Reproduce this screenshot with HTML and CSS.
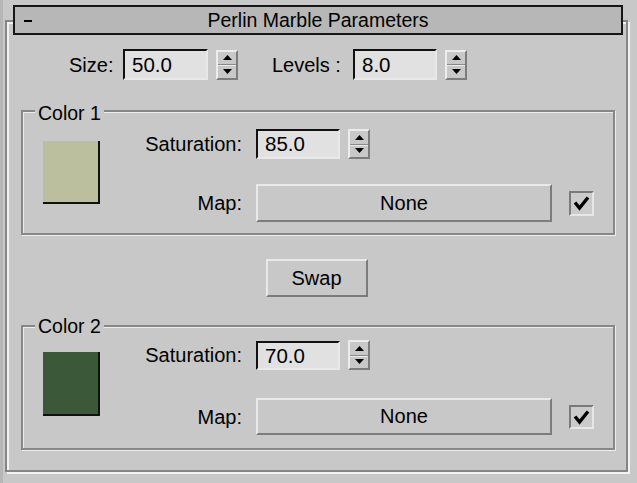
FILE: index.html
```html
<!DOCTYPE html>
<html>
<head>
<meta charset="utf-8">
<link rel="stylesheet" href="styles.css">
</head>
<body>
<div class="frame">
  <div class="title">
    <span class="minus"></span>
    <span class="title-text">Perlin Marble Parameters</span>
  </div>

  <div class="row1">
    <span class="label size-label">Size:</span>
    <div class="input w85">50.0</div>
    <div class="spin">
      <div class="spin-half"><svg width="9" height="5" viewBox="0 0 9 5"><polygon points="4.5,0 9,5 0,5" fill="#000"/></svg></div>
      <div class="spin-half low"><svg width="9" height="5" viewBox="0 0 9 5"><polygon points="0,0 9,0 4.5,5" fill="#000"/></svg></div>
    </div>
    <span class="label levels-label">Levels :</span>
    <div class="input w84">8.0</div>
    <div class="spin">
      <div class="spin-half"><svg width="9" height="5" viewBox="0 0 9 5"><polygon points="4.5,0 9,5 0,5" fill="#000"/></svg></div>
      <div class="spin-half low"><svg width="9" height="5" viewBox="0 0 9 5"><polygon points="0,0 9,0 4.5,5" fill="#000"/></svg></div>
    </div>
  </div>

  <div class="group">
    <div class="group-title">Color 1</div>
    <div class="group-body">
      <div class="swatch swatch1"></div>
      <div class="fields">
        <span class="label right">Saturation:</span>
        <div class="field-row">
          <div class="input w84">85.0</div>
          <div class="spin">
            <div class="spin-half"><svg width="9" height="5" viewBox="0 0 9 5"><polygon points="4.5,0 9,5 0,5" fill="#000"/></svg></div>
            <div class="spin-half low"><svg width="9" height="5" viewBox="0 0 9 5"><polygon points="0,0 9,0 4.5,5" fill="#000"/></svg></div>
          </div>
        </div>
        <span class="label right">Map:</span>
        <div class="field-row">
          <div class="button map-btn">None</div>
          <div class="check"><svg width="21" height="21" viewBox="0 0 21 21"><polyline points="4,9.5 8.5,15 17,4.5" fill="none" stroke="#000" stroke-width="3.4"/></svg></div>
        </div>
      </div>
    </div>
  </div>

  <div class="button swap">Swap</div>

  <div class="group group2">
    <div class="group-title">Color 2</div>
    <div class="group-body">
      <div class="swatch swatch2"></div>
      <div class="fields">
        <span class="label right">Saturation:</span>
        <div class="field-row">
          <div class="input w84">70.0</div>
          <div class="spin">
            <div class="spin-half"><svg width="9" height="5" viewBox="0 0 9 5"><polygon points="4.5,0 9,5 0,5" fill="#000"/></svg></div>
            <div class="spin-half low"><svg width="9" height="5" viewBox="0 0 9 5"><polygon points="0,0 9,0 4.5,5" fill="#000"/></svg></div>
          </div>
        </div>
        <span class="label right">Map:</span>
        <div class="field-row">
          <div class="button map-btn">None</div>
          <div class="check"><svg width="21" height="21" viewBox="0 0 21 21"><polyline points="4,9.5 8.5,15 17,4.5" fill="none" stroke="#000" stroke-width="3.4"/></svg></div>
        </div>
      </div>
    </div>
  </div>
</div>
</body>
</html>
```

FILE: styles.css
```css
* { box-sizing: border-box; }
html, body { margin: 0; padding: 0; }
body {
  width: 637px;
  height: 483px;
  overflow: hidden;
  background: #c8c8c8;
  font-family: "Liberation Sans", Arial, sans-serif;
  font-size: 20px;
  color: #000;
  box-shadow: inset 3px 0 0 #b6b6b6;
  padding-top: 20px;
}

.frame {
  margin-left: 5px;
  width: 623px;
  height: 452px;
  border: 2px solid #858585;
  box-shadow: inset 2px 2px 0 #f2f2f2, 2px 2px 0 #f2f2f2;
}

.title {
  margin: -17px 0 0 6px;
  width: 610px;
  height: 30px;
  border: 2px solid #161616;
  background: #b7b7b7;
  display: grid;
  grid-template-columns: 1fr auto 1fr;
  align-items: center;
}
.minus {
  justify-self: start;
  margin: 2px 0 0 9px;
  width: 8px;
  height: 2px;
  background: #000;
}
.title-text {
  font-size: 19.5px;
  line-height: 20px;
}

.label { line-height: 24px; white-space: nowrap; }
.right { text-align: right; }

.row1 {
  margin-top: 14px;
  padding-left: 62px;
  display: flex;
  align-items: center;
}
.size-label { width: 54px; }
.levels-label { width: 81px; margin-left: 34px; }

.input {
  height: 31px;
  background: #e1e1e1;
  border: 2px solid;
  border-color: #111 #e8e8e8 #e8e8e8 #111;
  padding-left: 7px;
  line-height: 27px;
  font-size: 20.5px;
}
.w85 { width: 85px; }
.w84 { width: 84px; }
.fields .input { height: 30px; line-height: 26px; }
.group2 .fields .input { height: 29px; line-height: 25px; }

.spin {
  margin-left: 8px;
  width: 22px;
  height: 30px;
  display: flex;
  flex-direction: column;
  border: 2px solid;
  border-color: #ececec #7c7c7c #7c7c7c #ececec;
}
.spin-half {
  flex: 1;
  display: flex;
  align-items: center;
  justify-content: center;
}
.spin-half svg { display: block; }
.spin-half.low {
  border-top: 1px solid #8a8a8a;
  box-shadow: inset 0 1px 0 #ececec;
}

.group {
  margin: 30px 0 0 14px;
  width: 594px;
  border: 2px solid #878787;
  box-shadow: inset 1px 1px 0 #ededed, 1px 1px 0 #ededed;
  padding-bottom: 11px;
}
.group-title {
  margin: -9px 0 0 12px;
  width: fit-content;
  padding: 0 3px;
  background: #c8c8c8;
  font-size: 19.5px;
  line-height: 20px;
}
.group-body {
  display: flex;
  align-items: flex-start;
}
.swatch {
  margin: 18px 0 0 20px;
  width: 57px;
  height: 63px;
  border-right: 2px solid #111;
  border-bottom: 2px solid #111;
}
.swatch1 { background: #bcbf9d; }
.swatch2 { background: #3b5939; }

.fields {
  margin-top: 6px;
  display: grid;
  grid-template-columns: 142px auto;
  column-gap: 14px;
  row-gap: 25px;
  align-items: center;
}
.field-row {
  display: flex;
  align-items: center;
}

.button {
  display: flex;
  align-items: center;
  justify-content: center;
  border: 2px solid;
  border-color: #e9e9e9 #7c7c7c #7c7c7c #e9e9e9;
  background: #c8c8c8;
}
.map-btn {
  width: 296px;
  height: 38px;
}
.check {
  margin-left: 17px;
  width: 25px;
  height: 25px;
  border: 2px solid;
  border-color: #7a7a7a #e6e6e6 #e6e6e6 #7a7a7a;
  background: #cbcbcb;
}
.check svg { display: block; }

.swap {
  margin: 24px auto 0;
  width: 102px;
  height: 38px;
}

.group2 { margin-top: 28px; padding-bottom: 13px; }
.group2 .group-title { margin-top: -11px; }
.group2 .swatch { margin-top: 16px; height: 64px; }
.group2 .fields { margin-top: 4px; row-gap: 28px; }
.group2 .map-btn { height: 37px; }
.group2 .check { height: 24px; }
```
